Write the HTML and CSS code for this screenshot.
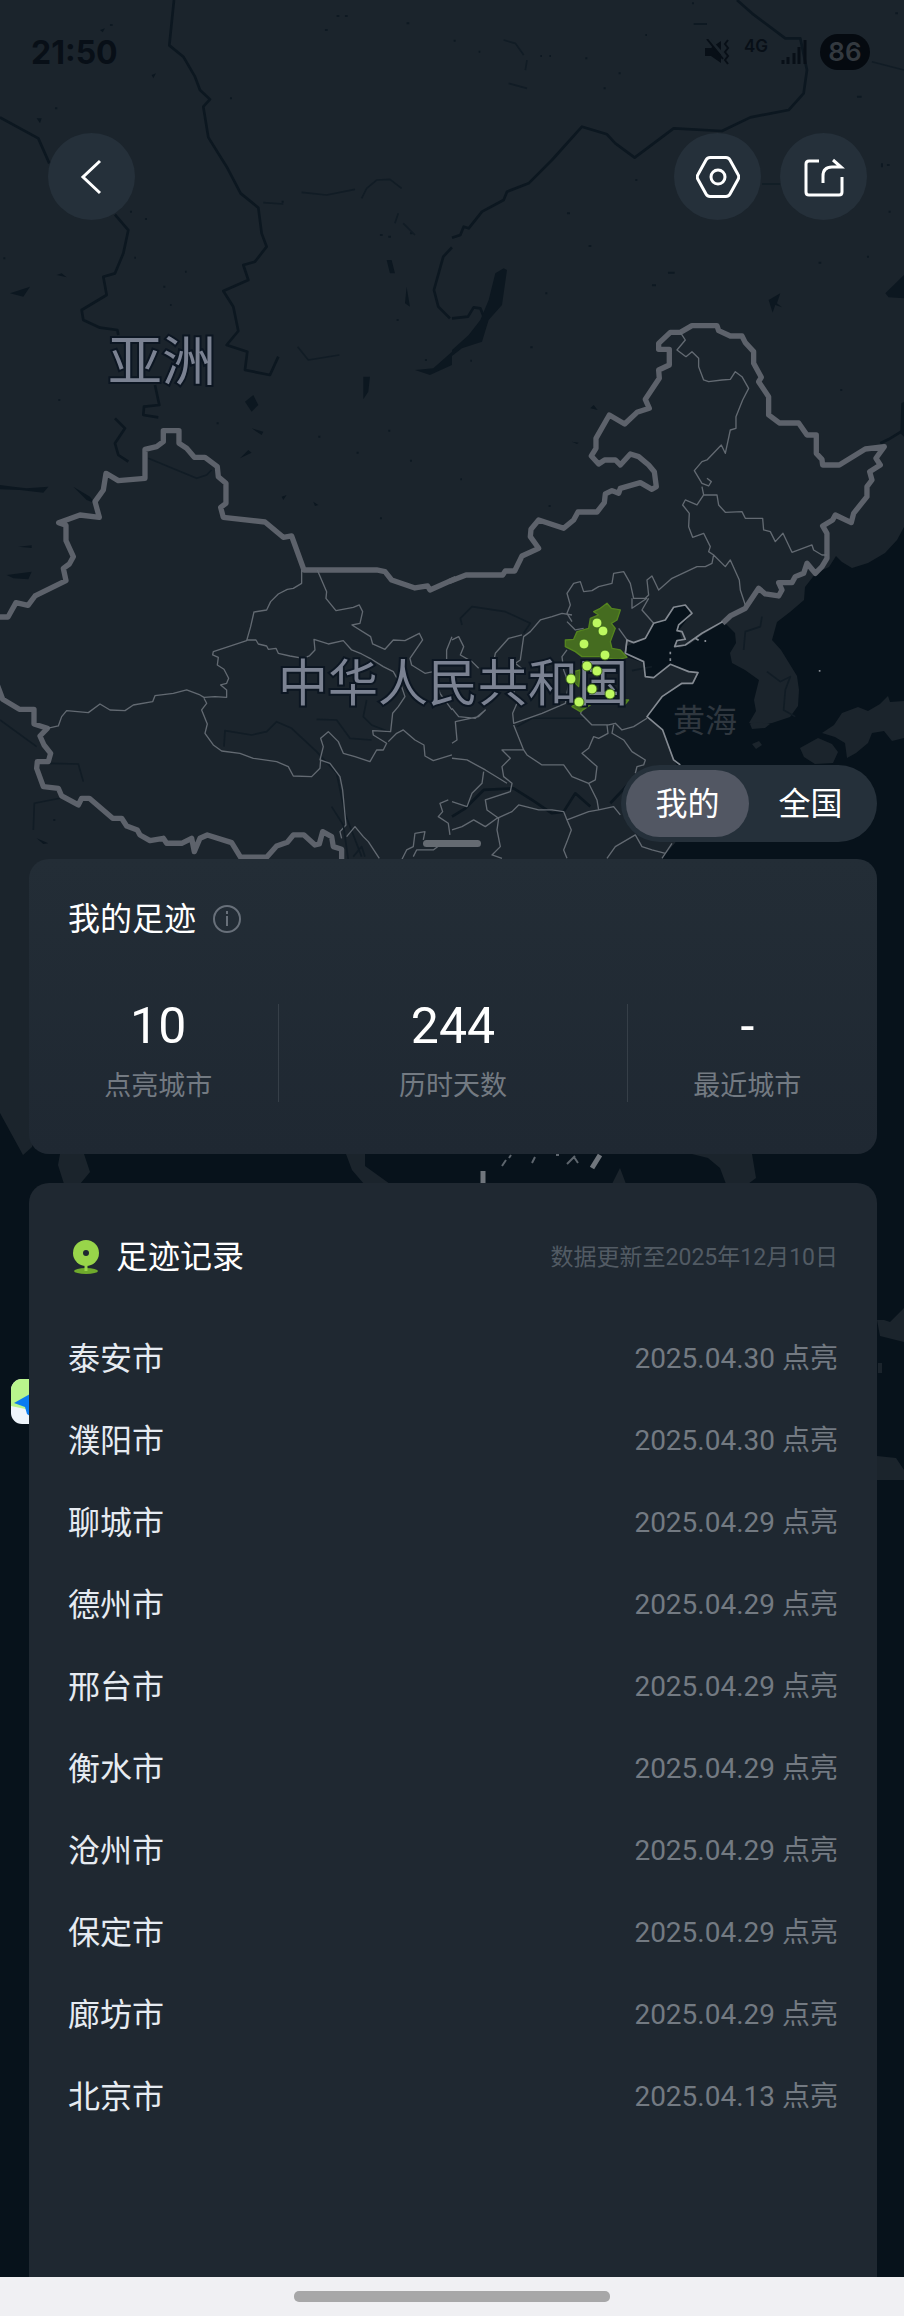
FILE: index.html
```html
<!DOCTYPE html>
<html lang="zh-CN">
<head>
  <title>我的足迹</title>
  <meta charset="utf-8">
  <meta name="viewport" content="width=device-width, initial-scale=1">
  <link rel="stylesheet" href="styles.css">
</head>
<body>
<div class="screen">
  <svg class="map" viewBox="0 0 904 2316" preserveAspectRatio="xMidYMin slice" aria-hidden="true">
    <!-- sea -->
    <path class="sea" d="M904 527L897 540L885 553L868 563L852 568L842 562L836 556L829 567L816 573L805 587L804 600L790 612L777 622L772 640L781 650L789 663L797 676L799 690L798 706L790 717L772 723L757 726L749 723L756 711L754 700L759 680L745 670L732 663L730 653L736 643L735 633L724 622L702 635L690 644L679 648L674 645L682 640L679 630L692 613L685 605L672 608L665 620L654 623L645 640L634 643L625 647L627 657L644 663L645 677L655 677L670 665L680 669L699 672L694 683L679 685L662 697L647 717L662 730L674 760L690 790L684 825L675 843L662 858L600 960L420 1050L250 1010L200 1080L60 1010L32 1147L23 1155L0 1113V2316H904Z"/>
    <g class="land">
      <path d="M822 733L834 725L842 713L858 707L868 711L880 704L888 696L890 702L904 701V738L892 741L884 731L872 733L868 743L856 753L847 758L845 743L835 737ZM800 748L818 738L832 744L838 752L833 763L815 764L804 757ZM752 744L759 741L762 745L756 749ZM750 724L756 722L770 724L765 728L752 729Z"/>
      <path d="M60 1154H84L90 1172L80 1184H64L58 1165ZM346 1154H365V1166L390 1184H364L352 1170ZM692 1154H752L756 1178L748 1184H726L720 1168L708 1158ZM612 1184L620 1168L626 1184ZM877 1320H884L890 1322L904 1308V1342L880 1336ZM878 1363H882V1373H878ZM877 1456L896 1458L904 1470V1480H877Z"/>
    </g>

    <!-- west side -->
    <g transform="translate(0 420) scale(.3333)">
      <path class="river" d="M522 -1260L508 -1124L550 -1090L585 -1030L600 -990L630 -962L610 -940L625 -848L680 -760L722 -680L775 -637L785 -560L800 -520L765 -475L730 -465L745 -420L670 -387L700 -340L715 -267L680 -225L742 -205L735 -150L810 -135L835 -190M0 -908L115 -845L148 -770M345 -616L385 -570L370 -500L345 -440L310 -430L320 -375L245 -330L250 -300L300 -277L352 -270L355 -255M465 -105L478 -45L432 -40L430 -15L475 -8M345 -5L375 25L345 70L355 105L385 125M1356 -518L1330 -490L1302 -390L1315 -340L1350 -305"/>
      <path class="lake" d="M0 195L40 200L80 205L145 200L130 218L60 210L0 208ZM220 200L270 230L285 250L260 240ZM20 465L95 455L85 478L40 475ZM55 380L95 376L95 384ZM735 -55L760 -75L775 -45L755 -25ZM1090 -130L1110 -130L1105 -85L1090 -62ZM30 -380L90 -400L70 -370ZM1245 -150L1300 -155L1356 -205V-165L1290 -135ZM720 115L745 90L755 98ZM755 25L790 35L785 45ZM170 -435L185 -440L200 -428ZM1160 -480L1170 -440L1185 -440L1175 -480ZM1220 -400L1230 -340L1215 -350ZM110 -905L125 -905L120 -890ZM455 -1035L468 -1040L460 -1025ZM845 230L860 225L850 240ZM940 245L955 255L945 258ZM300 -1170L315 -1175L308 -1163ZM110 1255L145 1270L130 1272Z"/>
      <path class="dots" d="M330 -1185h8M1010 -1212h8M1035 -1212h8M975 -1170h8M1220 -1190h8M690 -965h6M165 -935h7M490 -400h6M845 -655h6M390 -625h6M435 -603h6M10 -485h6M955 50h6M1165 32h6M1230 122h6M1070 98h6M1140 295h6M175 -60h6M650 10h6M160 1200h6M1140 -555h8M1165 -550h8M1230 -560h8M1190 -300h6M1275 -180h6M555 -445h5M403 -487h5M510 -345h5"/>
      <path class="faint-river" d="M893 -220L925 -180L1018 -195M445 115L530 150L590 175L620 165L635 150M0 900L110 980M150 1030L235 1032L250 1085M100 1230L103 1150L180 1135M672 980L675 932L755 945L800 935L830 905L875 925L950 995L1010 1060L1035 1180L1085 1310M950 898L1010 900L1050 955L1115 960M1100 840L1090 890L1115 915L1165 935M790 -652L850 -648M905 -683L980 -675L1065 -692M1085 -665L1100 -695L1130 -720L1170 -722L1205 -695M1185 -590L1195 -620M1210 -590L1245 -555"/>
      <path class="nation" d="M-10 591L24 591L48 548L84 556L105 528L198 482L190 445L208 432L220 410L198 362L198 316L176 308L240 285L298 292L285 245L310 210L318 160L355 182L435 175L435 88L470 80L490 65V32H537V70L560 85L583 112L615 112L652 140L655 170L678 190V250L662 262L670 292L795 306L850 352L875 348L912 450H1130L1155 455L1175 480L1245 504L1283 498L1290 510L1368 475"/>
      <path class="nation" d="M-10 790L8 838L58 868L102 868V912L142 925L120 948L132 975L152 1000L145 1025L112 1025L110 1045L130 1100L175 1105L185 1128L235 1155L245 1135L268 1135L338 1195L365 1195L380 1218L412 1230L420 1245L450 1262L490 1255L500 1270H545L575 1255L583 1295L600 1255L622 1245L695 1268L722 1312H800L830 1278L862 1267L880 1245H912L945 1275L958 1272L968 1235L995 1250L1000 1280L1025 1288V1330"/>
      <path class="province" d="M905 450L905 490L880 505L862 508L835 522L812 545L800 570L762 576L752 620L740 662L640 695L638 705L655 712L652 735L672 748L686 775L680 790L662 795L680 810L680 832L645 830L612 832L600 825L560 810L520 820L465 827L458 845L400 855L375 872L330 870L300 852L265 878L200 872L185 890L175 918L142 925M740 660L768 660L775 672L800 678L805 688L828 685L835 700L870 708L910 715L928 708L945 690L942 658L985 672L1030 662L1055 690L1085 702L1110 715L1150 740L1180 755L1205 800L1215 830L1195 860L1178 880L1172 935L1118 932L1120 945L1160 970L1150 990L1130 990L1110 1025L1065 1010L1030 1000L1015 965L985 935L962 955L970 980L960 1020L990 1030L1020 1070L1028 1110L1038 1215L1020 1235L1025 1255M612 835L620 850L605 870L622 912L615 940L640 975L665 993L720 1000L760 1015L830 1025L865 1040L880 1068L935 1070L960 1045L962 1020M952 450L980 515L978 535L1008 572L1060 562L1078 555L1088 575L1080 610L1056 615L1112 650L1118 672L1155 688L1180 660L1215 662L1258 640L1268 660L1230 715L1235 735L1275 760L1300 755L1320 820L1356 870M1165 965L1190 940L1210 930L1245 960L1272 975L1275 1008L1300 1022L1356 1005M1356 650L1340 690L1340 720M1345 1140L1320 1150L1328 1175L1315 1190L1345 1210L1350 1245M1205 1320L1220 1290L1240 1280L1245 1240L1275 1235L1270 1260M1240 1310L1250 1290L1300 1290L1320 1275L1356 1275M1040 1250L1065 1220L1090 1250L1105 1265L1138 1315"/>
      <path class="faint-river" d="M995 1160L1030 1215L1045 1320M1060 1310L1085 1280L1095 1310"/>
    </g>

    <!-- east side -->
    <g transform="translate(452 300) scale(.3333)">
      <path class="river" d="M855 -900L900 -860L1000 -785L1045 -785L1065 -690L1055 -620L1010 -570L895 -548L810 -507L665 -515L548 -427L490 -470L465 -497L390 -520L300 -420L230 -350L165 -325L155 -300L90 -265L50 -215L35 -220L25 -195L0 -187M0 55L48 50L65 22L85 25L95 50M1356 390L1310 418L1285 430M0 1550L40 1525L95 1470L185 1465L240 1500L300 1540L335 1535L370 1480L415 1520M475 1510L560 1420"/>
      <path class="lake" d="M155 -95L165 -90L150 15L110 60L90 125L30 145L0 168V150L50 105L85 60L110 0L130 -80ZM950 0L985 -20L975 10L990 22L970 15L962 38ZM1300 -20L1356 -75V-5L1310 -8ZM415 325L425 315L437 330ZM360 425L380 428L375 432ZM1348 310L1356 305V410L1345 400Z"/>
      <path class="dots" d="M5 -778h6M265 -732h5M292 -732h5M400 -725h6M725 -828h40M720 -890h6M345 -260h9M410 -162h8M1245 -130h6M1100 -112h8M280 -20h6M235 142h7M1165 270h6M55 182h5M25 538h5M290 618h6M500 -680h6M455 -635h6M1215 -610h14M1310 -265h6M1290 -410v12M1305 -405h8M550 -360h6M648 -82h20M600 -44h12M1330 -860h8M80 -745h5M580 -795h5"/>
      <path class="faint-river" d="M195 1280L240 1255L400 1255M540 1112L600 1100M30 975L25 955L60 920L160 935L235 970L215 1000M155 -780L190 -770L215 -735M225 -720L220 -690M170 -650L225 -635M930 -348L985 -348M1260 -715L1356 -690"/>
      <path class="faint-river" d="M930 950L925 980L880 995L875 1050M945 1115L985 1145L1015 1130L1000 1170L995 1230L1030 1250"/>
      <path class="nation" d="M-10 845L42 825H152L160 813H188L210 768L260 745L235 710L237 688L260 660L335 685L365 660L378 636H435L457 608L460 582L480 572L500 580L505 565L565 548L600 568L613 560L607 515L590 495L560 470L535 462L505 495L490 480H458L440 492L418 468L432 445L432 415L472 345L518 372L555 337L592 325L580 298L622 235L620 210L652 195V148H620V130L655 97L685 97L720 77H795L800 92L835 108H870L880 128L905 155V190L928 232L920 245L950 290V345L982 369H1040L1065 405H1093V460L1110 478L1112 495H1162L1240 447L1297 440L1272 475L1285 495L1253 515L1260 540L1245 560V590L1205 640L1198 668L1150 645L1142 660L1112 678L1125 700V775L1110 800L1090 820L1065 790L1055 820L1030 830L1020 848H980L990 870L980 888L940 882L920 865L880 925L835 948L812 970"/>
      <path class="province" d="M685 97L700 120L675 150L702 170L720 155L740 175L740 200L755 240L770 245L810 240L835 238L850 215L870 230L890 265L872 300L852 350V385L835 390L820 460L808 435L765 480L750 485L727 512L750 550L770 558L778 545L765 535M750 560L755 585L795 585L800 615L820 637L870 635L880 655L932 655L935 690L955 695L970 725L993 700L1020 757L1080 735L1085 750L1110 765H1125M755 585L735 615L700 600L692 615L712 640L710 680L722 712L755 700L775 740L770 755L785 765L780 790L760 800L735 800L660 835L620 870L600 828L585 840L590 885L580 895H545L535 850L515 815L485 820L480 850L440 860L420 872L395 875L385 845L365 850L345 880L355 915L345 940L360 965M785 765L820 800L835 780L862 840L865 870L880 915M590 895L570 930L605 970M540 895L540 925L585 895"/>
      <path class="province" d="M360 945L330 940L300 950L265 960L235 995L215 1010L205 1080L190 1090L215 1110M210 1005L170 1015L130 1060L125 1085M0 1020L20 1010L35 1040L25 1065L60 1085L80 1105M345 965L370 990L395 985M345 1050L330 1070L335 1110L350 1150L340 1210L305 1225L270 1240L185 1270L182 1240L195 1210L185 1170M185 1275L215 1350L225 1365L270 1395L335 1395L360 1430L410 1450L435 1500L440 1530M215 1350L150 1350L175 1375L150 1400L155 1430L180 1450L175 1475L100 1500L105 1530L140 1555L135 1590L145 1640L120 1665L150 1675M0 1225L20 1250L70 1255L100 1230L80 1250L10 1265L15 1320L0 1330M0 1375L45 1380L100 1410L165 1450M95 1415L90 1450L60 1480L45 1520L0 1505M0 1590L30 1580L65 1560L100 1580L135 1555L180 1535L200 1515L260 1530L300 1530L335 1535L345 1560L410 1535L440 1530L485 1520L505 1545M345 1560L358 1590L345 1625L335 1650L345 1675M500 985L525 1020L520 1060M385 1240L420 1275L470 1275L490 1270L510 1290L545 1280L585 1255M465 1275L468 1300L440 1315L425 1310L410 1345L390 1360L435 1400L430 1440L410 1450M485 1275L480 1300L515 1320L540 1355L580 1380L575 1395L555 1400L550 1420M465 1675L490 1640L550 1605L570 1640L600 1650L640 1660M660 1630L630 1675M385 1240L400 1215"/>
      <path class="coast" d="M812 965L750 1000L700 1035L668 1040L675 1022L700 1018L690 995L675 992L680 975L720 940L700 915L665 922L640 960L605 970L580 1015L545 1028L525 1020L520 1060L575 1085L580 1130L605 1133L655 1093L710 1115L738 1118L722 1150L690 1150L630 1190L585 1250L632 1290L665 1380L685 1395"/>
      <path class="coast" d="M730 1015l10 6M760 1020v6M655 1055v8M655 1075v8M1103 1110v5"/>
      <!-- lit cities -->
      <path class="city-glow" d="M465 910L478 925L505 930L495 960L478 970L490 985L475 1025L480 1045L505 1050L525 1072L500 1078L470 1075L445 1070L390 1070L370 1055L340 1040V1020L365 1018L375 995L410 985L415 955L440 945L425 935L445 925ZM365 1115L385 1110L380 1160L365 1145ZM360 1220L385 1200L415 1215L385 1235ZM515 1200L530 1200L520 1212Z"/>
    </g>

    <text class="map-label" x="108" y="381" font-size="54">亚洲</text>
    <text class="map-label" x="278" y="701" font-size="50">中华人民共和国</text>
    <text class="sea-label" x="673" y="732" font-size="32">黄海</text>

    <g class="city-dot">
      <circle cx="597" cy="623" r="5"/>
      <circle cx="603" cy="631" r="5"/>
      <circle cx="584" cy="644" r="5"/>
      <circle cx="605" cy="655" r="5"/>
      <circle cx="587" cy="666" r="5"/>
      <circle cx="597" cy="671" r="5"/>
      <circle cx="571" cy="679" r="5"/>
      <circle cx="592" cy="689" r="5"/>
      <circle cx="610" cy="694" r="5"/>
      <circle cx="579" cy="702" r="5"/>
    </g>

    <!-- southern islands -->
    <path class="island" d="M502 1166l4-6M509 1158l2-3M532 1163l3-6M556 1155h3M567 1164l8-8M574 1157l4 6"/>
    <path class="dash" d="M592 1168L600 1155M483 1171V1186"/>

    <!-- current position -->
    <g class="position">
      <path class="base" d="M30 1379H22a11 11 0 0 0-11 11V1413a11 11 0 0 0 11 11H30Z"/>
      <path class="park" d="M30 1379H22a11 11 0 0 0-11 11V1406L30 1410Z"/>
      <path class="arrow" d="M14 1403L30 1394V1416L27 1414L25 1407Z"/>
    </g>
  </svg>

  <header class="hero">
    <div class="status">
      <span class="time">21:50</span>
      <div class="status-icons">
        <svg width="26" height="26" viewBox="0 0 26 26">
          <path fill="#080f17" d="M0 9H6L16 2V24L6 17H0Z"/>
          <path fill="none" stroke="#1b242c" stroke-width="3" d="M4 0L20 18"/>
          <path fill="none" stroke="#080f17" stroke-width="2" d="M2 0L18 20M23 1l-3 4 3 4-3 4 3 4-3 4 3 4"/>
        </svg>
        <span class="net">4G</span>
        <svg width="26" height="24" viewBox="0 0 26 24">
          <path stroke="#080f17" stroke-width="3" d="M2 24v-4M7 24v-7M13 24v-11M18 24V7M24 24V0"/>
        </svg>
        <span class="battery">86</span>
      </div>
    </div>
    <nav class="nav">
      <button class="round" type="button" aria-label="返回">
        <svg width="44" height="44" viewBox="0 0 44 44"><path d="M30 6L13 22L30 38"/></svg>
      </button>
      <div class="nav-right">
        <button class="round" type="button" aria-label="设置">
          <svg width="44" height="44" viewBox="0 0 44 44">
            <path d="M14 2.500H30Q32.500 2.500 34 5L42 19.500Q43.500 22 42 24.500L34 39Q32.500 41.500 30 41.500H14Q11.500 41.500 10 39L2 24.500Q.5 22 2 19.500L10 5Q11.500 2.500 14 2.500Z"/>
            <circle cx="22" cy="22" r="7"/>
          </svg>
        </button>
        <button class="round" type="button" aria-label="分享">
          <svg width="44" height="44" viewBox="0 0 44 44">
            <path d="M17 6H7Q4 6 4 9V37Q4 40 7 40H37Q40 40 40 37V22"/>
            <path d="M21 28V21Q21 12 30 12H39L31 5"/>
          </svg>
        </button>
      </div>
    </nav>
    <div class="tabs">
      <button class="tab active" type="button">我的</button>
      <button class="tab" type="button">全国</button>
    </div>
    <div class="handle"></div>
  </header>

  <main>
    <section class="card summary">
      <h2>我的足迹
        <svg width="30" height="30" viewBox="0 0 30 30">
          <circle cx="15" cy="15" r="13"/>
          <path d="M15 12V22M15 7V10"/>
        </svg>
      </h2>
      <div class="stats">
        <div class="stat"><strong>10</strong><span>点亮城市</span></div>
        <div class="stat"><strong>244</strong><span>历时天数</span></div>
        <div class="stat"><strong>-</strong><span>最近城市</span></div>
      </div>
    </section>

    <section class="card records">
      <div class="records-head">
        <h2>
          <svg width="36" height="36" viewBox="0 0 36 36">
            <ellipse cx="18" cy="32" rx="12" ry="3" fill="#6faa2c"/>
            <path stroke="#98d54a" stroke-width="3" d="M18 24V32"/>
            <circle cx="18" cy="14" r="13" fill="#98d54a"/>
            <circle cx="18" cy="14" r="3" fill="#1f2831"/>
          </svg>
          足迹记录
        </h2>
        <span class="updated">数据更新至2025年12月10日</span>
      </div>
      <ul>
        <li><span>泰安市</span><time>2025.04.30 点亮</time></li>
        <li><span>濮阳市</span><time>2025.04.30 点亮</time></li>
        <li><span>聊城市</span><time>2025.04.29 点亮</time></li>
        <li><span>德州市</span><time>2025.04.29 点亮</time></li>
        <li><span>邢台市</span><time>2025.04.29 点亮</time></li>
        <li><span>衡水市</span><time>2025.04.29 点亮</time></li>
        <li><span>沧州市</span><time>2025.04.29 点亮</time></li>
        <li><span>保定市</span><time>2025.04.29 点亮</time></li>
        <li><span>廊坊市</span><time>2025.04.29 点亮</time></li>
        <li><span>北京市</span><time>2025.04.13 点亮</time></li>
      </ul>
    </section>
  </main>

  <footer class="home-bar"><div class="pill"></div></footer>
</div>
</body>
</html>
```
FILE: styles.css
```css
* {
  box-sizing: border-box;
}

body {
  margin: 0;
  background: #07121a;
  color: #fff;
  font-family: Roboto, "Noto Sans CJK SC", sans-serif;
}

button {
  border: 0;
  padding: 0;
  color: inherit;
  font: inherit;
}

.screen {
  position: relative;
  display: flex;
  flex-direction: column;
  min-height: 100vh;
  overflow: hidden;
}

/* map behind everything */
.map {
  position: absolute;
  top: 0;
  left: 0;
  width: 100%;
  height: 100%;
  background: #1b242c;
}

.map path {
  fill: none;
  stroke-linejoin: round;
}

.map .sea {
  fill: #07121b;
}

.map .land path {
  fill: #1b242c;
}

.map .lake {
  fill: #0c1720;
}

.map .river {
  stroke: #0c1720;
  stroke-width: 8;
}

.map .faint-river {
  stroke: #111c25;
  stroke-width: 5;
}

.map .dots {
  stroke: #0e1922;
  stroke-width: 6;
}

.map .nation {
  stroke: #5d626b;
  stroke-width: 16;
}

.map .province {
  stroke: #636a72;
  stroke-width: 4;
}

.map .coast {
  stroke: #858b93;
  stroke-width: 5;
}

.map .city-glow {
  fill: #456c20;
  stroke: #54841f;
  stroke-width: 4;
}

.map .island {
  stroke: #5d656d;
  stroke-width: 2;
}

.map .dash {
  stroke: #70767d;
  stroke-width: 5;
}

.position .base {
  fill: #eef4fb;
}

.position .park {
  fill: #b9f58c;
}

.position .arrow {
  fill: #0a7cf0;
}

.map-label {
  fill: #7b8292;
  stroke: #0c1622;
  stroke-width: 4;
  paint-order: stroke;
}

.sea-label {
  fill: #2f373f;
}

.city-dot {
  fill: #bdf860;
  stroke: #3f6a1c;
  stroke-width: 1;
}

/* top part */
.hero {
  position: relative;
  display: flex;
  flex-direction: column;
  min-height: 859px;
  padding-bottom: 17px;
}

.status {
  display: flex;
  justify-content: space-between;
  align-items: center;
  height: 104px;
  padding: 0 34px 0 31px;
  color: #080f17;
}

.time {
  font-family: Inter, sans-serif;
  font-size: 32px;
  font-weight: 700;
}

.status-icons {
  display: flex;
  align-items: center;
  gap: 13px;
}

.net {
  padding-bottom: 12px;
  font-family: Inter, sans-serif;
  font-size: 17px;
  font-weight: 600;
}

.battery {
  width: 50px;
  border-radius: 18px;
  background: #050a10;
  color: #33393f;
  font-family: Inter, sans-serif;
  font-size: 26px;
  font-weight: 600;
  line-height: 36px;
  text-align: center;
}

.nav {
  display: flex;
  justify-content: space-between;
  margin-top: 29px;
  padding: 0 37px 0 48px;
}

.nav-right {
  display: flex;
  gap: 19px;
}

.round {
  display: flex;
  align-items: center;
  justify-content: center;
  width: 87px;
  height: 87px;
  border-radius: 50%;
  background: #25303a;
}

.round svg {
  fill: none;
  stroke: #fff;
  stroke-width: 3;
}

.tabs {
  display: flex;
  align-self: flex-end;
  margin-top: auto;
  margin-right: 27px;
  padding: 5px;
  border-radius: 39px;
  background: #25303a;
}

.tab {
  width: 123px;
  height: 67px;
  padding-bottom: 6px;
  border-radius: 34px;
  background: transparent;
  font-size: 32px;
}

.tab.active {
  background: #525763;
}

.handle {
  position: absolute;
  bottom: 12px;
  left: 50%;
  width: 58px;
  height: 7px;
  margin-left: -29px;
  border-radius: 4px;
  background: #656b72;
}

/* cards */
main {
  position: relative;
  display: flex;
  flex: 1;
  flex-direction: column;
  gap: 29px;
  padding: 0 27px 0 29px;
}

.card {
  border-radius: 20px;
  background: #1f2831;
}

.card h2 {
  display: flex;
  align-items: center;
  margin: 0;
  font-size: 32px;
  font-weight: 400;
  line-height: 40px;
}

.summary {
  min-height: 295px;
  padding: 40px 10px 0 9px;
  background: linear-gradient(#232d36, #1f2832);
}

.summary h2 {
  gap: 16px;
  padding-left: 30px;
}

.summary h2 svg {
  fill: none;
  stroke: #68707a;
  stroke-width: 2;
}

.stats {
  display: grid;
  grid-template-columns: 20fr 29fr 20fr;
  margin-top: 65px;
}

.stat {
  display: flex;
  flex-direction: column;
  align-items: center;
  gap: 13px;
  height: 98px;
}

.stat + .stat {
  border-left: 1px solid #363f48;
}

.stat strong {
  font-size: 50px;
  font-weight: 400;
  line-height: 44px;
}

.stat span {
  color: #737a82;
  font-size: 27px;
  line-height: 50px;
}

.records {
  flex: 1;
  padding: 54px 39px 0;
  border-radius: 20px 20px 0 0;
}

.records-head {
  display: flex;
  justify-content: space-between;
  align-items: center;
  margin-bottom: 38px;
}

.records h2 {
  gap: 12px;
}

.updated {
  padding-bottom: 4px;
  color: #525b64;
  font-size: 23px;
}

.records ul {
  margin: 0;
  padding: 0;
  list-style: none;
}

.records li {
  display: flex;
  justify-content: space-between;
  align-items: center;
  height: 82px;
  color: #e6ebf1;
  font-size: 32px;
}

.records time {
  color: #737a82;
  font-size: 28px;
}

.home-bar {
  position: relative;
  display: flex;
  align-items: center;
  justify-content: center;
  height: 39px;
  background: #f0f0f3;
}

.pill {
  width: 35%;
  height: 11px;
  border-radius: 5px;
  background: #a7a7a8;
}
```
